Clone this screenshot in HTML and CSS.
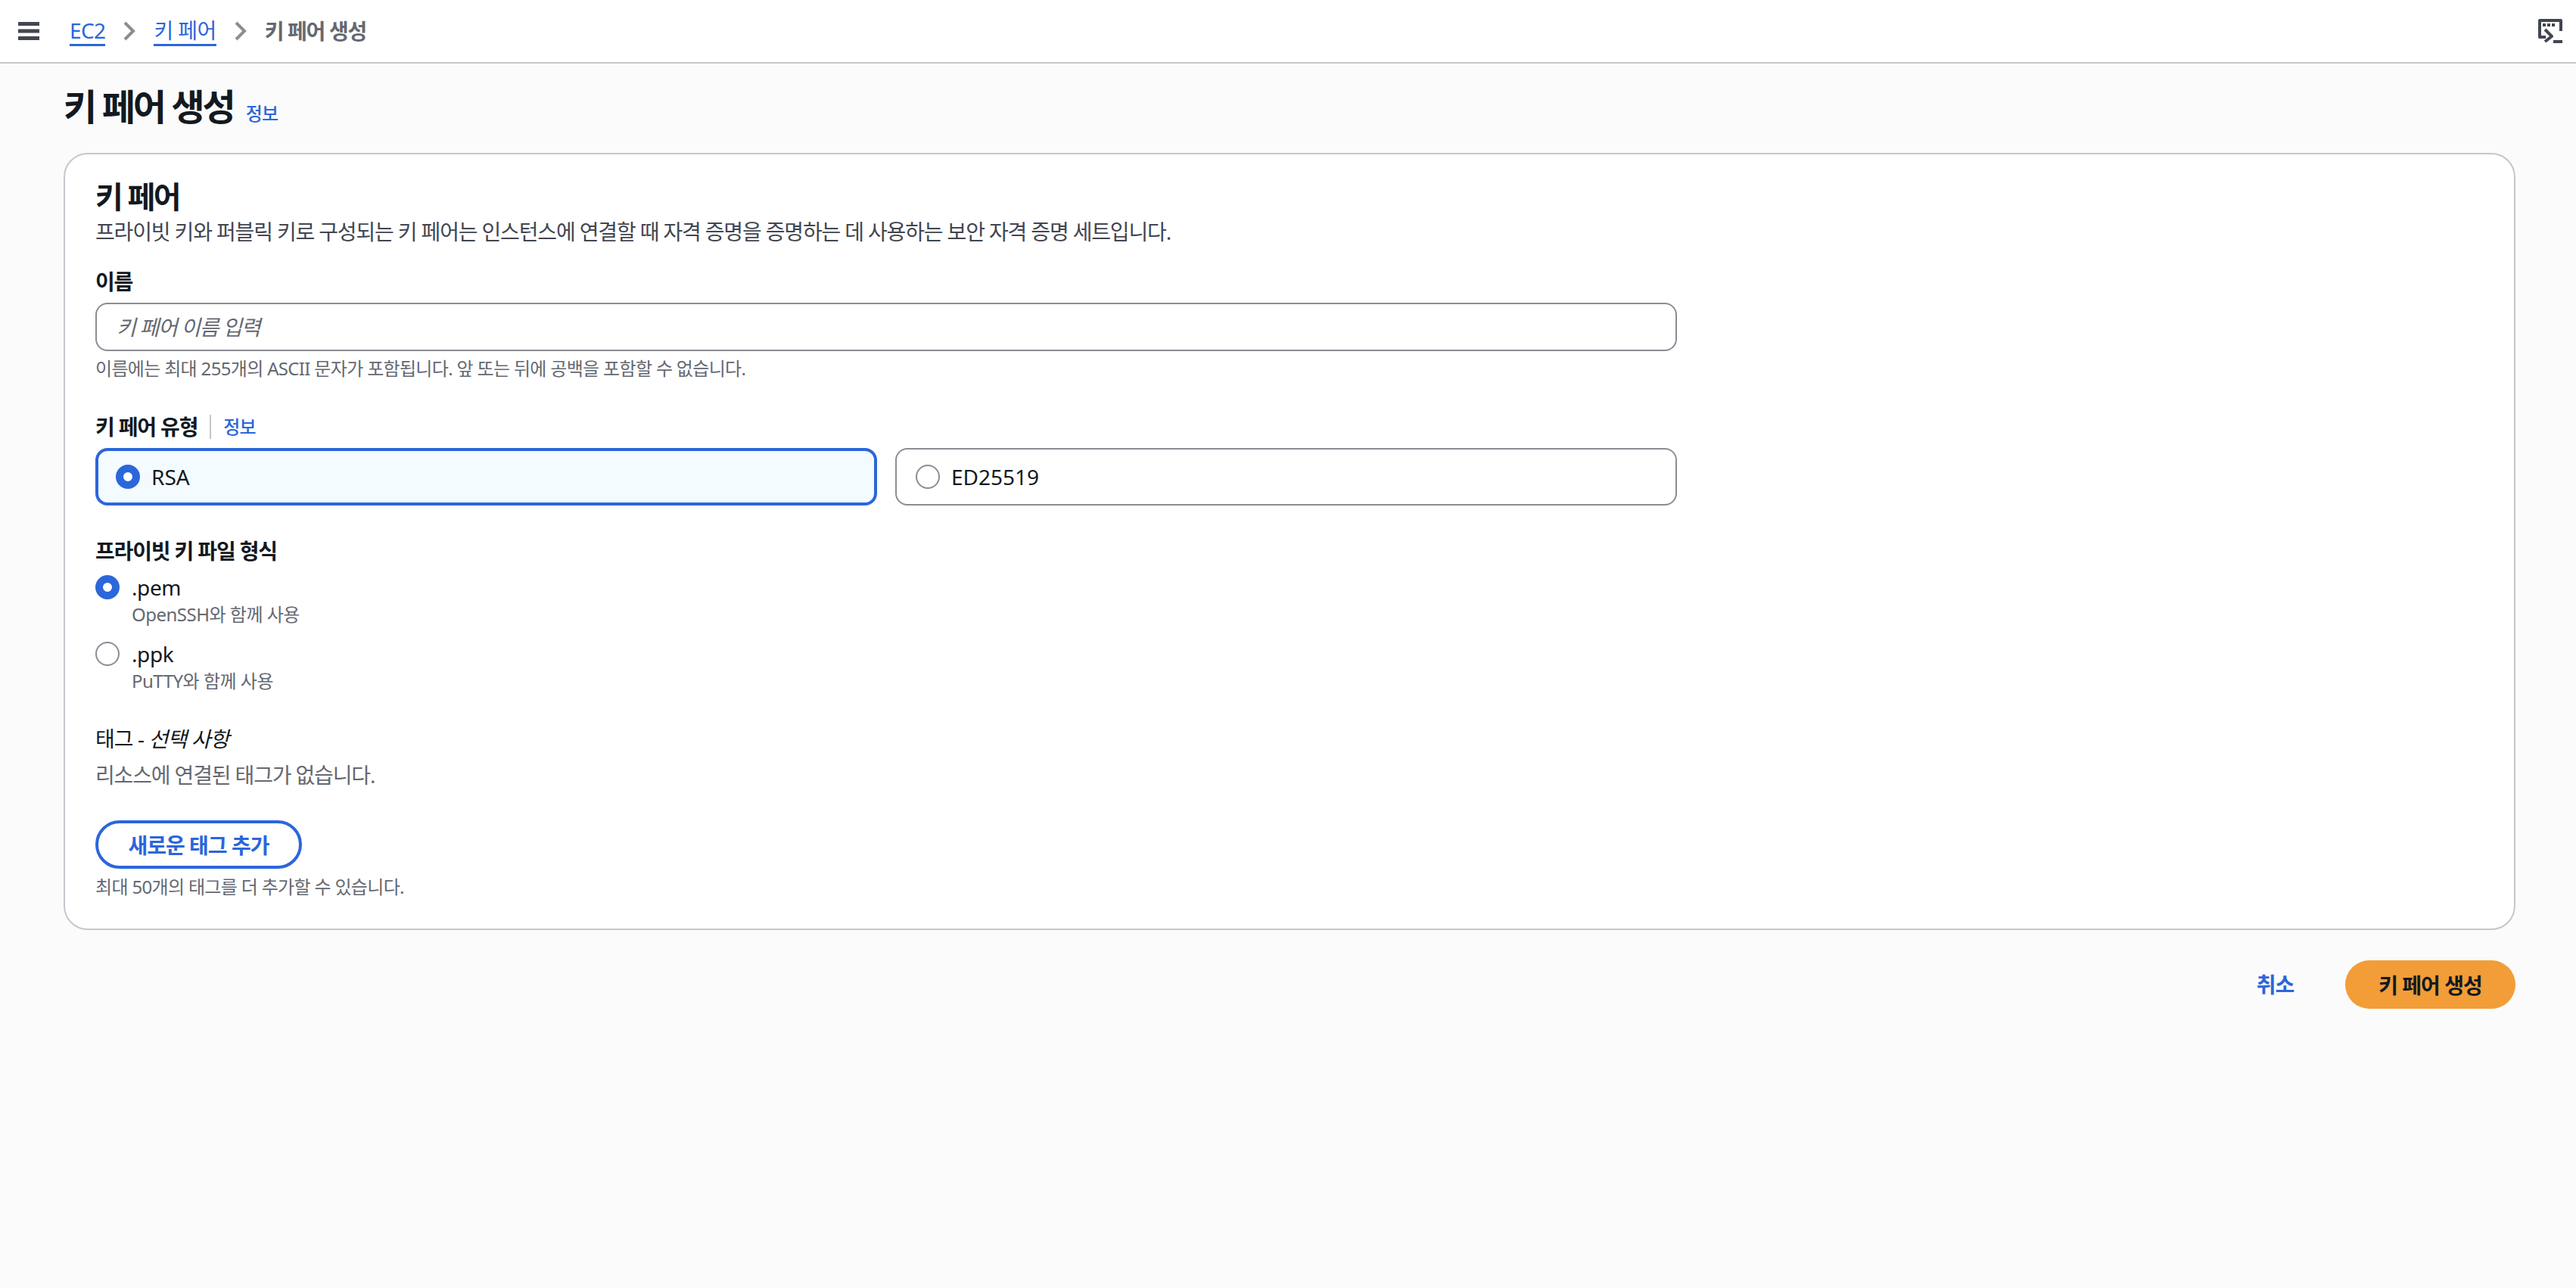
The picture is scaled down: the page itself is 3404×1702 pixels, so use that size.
FILE: index.html
```html
<!DOCTYPE html>
<html lang="ko">
<head>
<meta charset="utf-8">
<title>키 페어 생성</title>
<link rel="stylesheet" href="styles.css">
</head>
<body>
<header class="topbar">
  <svg class="menu-icon" viewBox="0 0 28 24"><path d="M0 2.5h28M0 12h28M0 21.5h28"/></svg>
  <nav class="crumbs">
    <a class="crumb-link">EC2</a>
    <svg class="chev" viewBox="0 0 16 26"><path d="M2 2l11 11L2 24"/></svg>
    <a class="crumb-link">키 페어</a>
    <svg class="chev" viewBox="0 0 16 26"><path d="M2 2l11 11L2 24"/></svg>
    <span class="crumb-current">키 페어 생성</span>
  </nav>
  <svg class="shell-icon" viewBox="0 0 32 32">
    <path class="shell-stroke" d="M30 16V2H2v22h8M9 14l9 9-9 7"/>
    <path class="shell-fill" d="M6 6h4v4H6zM12 6h4v4h-4zM18 6h4v4h-4zM20 28h12v4H20z"/>
  </svg>
</header>
<main class="page">
  <div class="title-row">
    <h1 class="page-title">키 페어 생성</h1>
    <a class="info-link">정보</a>
  </div>
  <section class="card">
    <h2 class="card-title">키 페어</h2>
    <p class="card-desc">프라이빗 키와 퍼블릭 키로 구성되는 키 페어는 인스턴스에 연결할 때 자격 증명을 증명하는 데 사용하는 보안 자격 증명 세트입니다.</p>
    <div class="form-col">
      <label class="field-label name-label">이름</label>
      <input class="text-input" type="text" placeholder="키 페어 이름 입력">
      <p class="hint name-hint">이름에는 최대 255개의 ASCII 문자가 포함됩니다. 앞 또는 뒤에 공백을 포함할 수 없습니다.</p>
      <div class="label-row">
        <span class="field-label">키 페어 유형</span>
        <a class="info-link info-divided">정보</a>
      </div>
      <div class="tiles">
        <div class="tile tile-on"><span class="radio radio-on"></span><span class="tile-text">RSA</span></div>
        <div class="tile"><span class="radio"></span><span class="tile-text">ED25519</span></div>
      </div>
    </div>
    <div class="field-label format-label">프라이빗 키 파일 형식</div>
    <div class="option">
      <span class="radio radio-on"></span>
      <div><div class="option-name">.pem</div><div class="option-sub">OpenSSH와 함께 사용</div></div>
    </div>
    <div class="option option-second">
      <span class="radio"></span>
      <div><div class="option-name">.ppk</div><div class="option-sub">PuTTY와 함께 사용</div></div>
    </div>
    <div class="tag-title">태그 - <i>선택 사항</i></div>
    <p class="tag-empty">리소스에 연결된 태그가 없습니다.</p>
    <button class="btn-outline" type="button">새로운 태그 추가</button>
    <p class="hint tag-hint">최대 50개의 태그를 더 추가할 수 있습니다.</p>
  </section>
  <div class="actions">
    <a class="cancel">취소</a>
    <button class="btn-primary" type="button">키 페어 생성</button>
  </div>
</main>
</body>
</html>
```
FILE: styles.css
```css
* { box-sizing: border-box; }
html, body { margin: 0; height: 100%; }
body {
  background: #fbfbfc;
  color: #131920;
  font-family: "Noto Sans", "Noto Sans CJK KR", sans-serif;
  font-size: 28px;
  line-height: 40px;
  letter-spacing: -1.15px;
}
p, h1, h2 { margin: 0; }

.topbar {
  height: 84px;
  background: #fff;
  border-bottom: 2px solid #c6c6cd;
  display: flex;
  align-items: center;
  padding: 0 18px 0 24px;
}
.menu-icon { width: 28px; height: 24px; fill: none; stroke: #424650; stroke-width: 5; flex: none; }
.crumbs { display: flex; align-items: center; margin-left: 40px; flex: 1; }
.crumb-link { color: #2b66db; border-bottom: 3px solid #2b66db; line-height: 36px; letter-spacing: -0.6px; }
.crumb-current { color: #656871; font-weight: 700; letter-spacing: -1.3px; }
.chev { width: 16px; height: 26px; margin: 0 24px; fill: none; stroke: #8c8c94; stroke-width: 4; }
.shell-icon { width: 32px; height: 32px; flex: none; }
.shell-stroke { fill: none; stroke: #424650; stroke-width: 4; stroke-linejoin: round; }
.shell-fill { fill: #424650; }

.page { padding: 0 80px 0 84px; }
.title-row { display: flex; align-items: baseline; height: 118px; padding-top: 29px; }
.page-title { font-size: 48px; line-height: 56px; font-weight: 700; letter-spacing: -3px; }
.info-link { color: #2b66db; font-size: 24px; line-height: 32px; font-weight: 500; letter-spacing: -0.8px; }
.title-row .info-link { margin-left: 16px; }

.card {
  background: #fff;
  border: 2px solid #c6c6cd;
  border-radius: 32px;
  height: 1027px;
  padding: 32px 40px 0;
}
.card-title { font-size: 40px; line-height: 48px; font-weight: 700; letter-spacing: -2.4px; }
.card-desc { color: #424650; line-height: 40px; margin-top: 2px; }
.form-col { width: 2090px; }
.field-label { font-weight: 700; line-height: 40px; }
.name-label { display: block; margin-top: 26px; }
.text-input {
  display: block;
  width: 100%;
  height: 64px;
  margin-top: 8px;
  padding: 0 26px;
  background: #fff;
  border: 2px solid #8c8c94;
  border-radius: 16px;
  font: italic 28px "Noto Sans", "Noto Sans CJK KR", sans-serif;
  letter-spacing: -1.3px;
}
.text-input::placeholder { color: #656871; opacity: 1; }
.hint { color: #656871; font-size: 24px; line-height: 32px; letter-spacing: -0.67px; }
.name-hint { margin-top: 7px; }
.label-row { display: flex; align-items: center; margin-top: 43px; height: 36px; }
.info-divided { margin-left: 16px; padding-left: 16px; border-left: 2px solid #c6c6cd; }
.tiles { display: grid; grid-template-columns: 1fr 1fr; gap: 24px; margin-top: 10px; }
.tile {
  height: 76px;
  display: flex;
  align-items: center;
  gap: 15px;
  padding: 0 25px;
  border: 2px solid #8c8c94;
  border-radius: 16px;
  background: #fff;
  letter-spacing: 0;
}
.tile-on { border: 4px solid #2b66db; background: #f3fbff; padding: 0 23px; }
.radio {
  width: 32px;
  height: 32px;
  flex: none;
  border-radius: 50%;
  border: 2px solid #8c8c94;
  background: #fff;
}
.radio-on { border: 10px solid #2b66db; }
.format-label { margin-top: 40px; }
.option { display: flex; gap: 16px; margin-top: 8px; align-items: flex-start; }
.option > .radio { margin-top: 4px; }
.option-second { margin-top: 16px; }
.option-name { line-height: 40px; letter-spacing: -0.4px; }
.option-sub { color: #656871; font-size: 24px; line-height: 32px; letter-spacing: -0.5px; }
.tag-title { margin-top: 40px; line-height: 40px; letter-spacing: -0.9px; }
.tag-empty { color: #656871; margin-top: 8px; }
.btn-outline, .btn-primary {
  font-family: inherit;
  font-size: 28px;
  font-weight: 700;
  letter-spacing: -1px;
  border-radius: 32px;
  height: 64px;
  cursor: pointer;
}
.btn-outline {
  display: block;
  width: 273px;
  margin-top: 40px;
  padding: 0;
  background: #fff;
  color: #2b66db;
  border: 4px solid #2b66db;
}
.tag-hint { margin-top: 8px; }
.actions { display: flex; justify-content: flex-end; align-items: center; margin-top: 40px; }
.cancel { color: #2b66db; font-weight: 700; margin-right: 68px; }
.btn-primary { width: 225px; border: 0; background: #f29d38; color: #131920; }
```
